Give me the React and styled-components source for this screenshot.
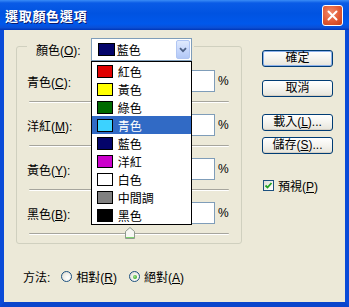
import React from "react";
import styled, { createGlobalStyle } from "styled-components";

const GlobalStyle = createGlobalStyle`
  html, body { margin: 0; padding: 0; background: #ECE9D8; }
  body {
    font-family: "Liberation Sans", "Noto Sans CJK TC", sans-serif;
    font-size: 12px;
    color: #000;
  }
  u { text-decoration: underline; text-underline-offset: 1px; }
`;

const Window = styled.div`
  width: 349px;
  height: 307px;
  display: flex;
  flex-direction: column;
  overflow: hidden;
`;

const TitleBar = styled.div`
  height: 30px;
  flex: none;
  box-sizing: border-box;
  display: flex;
  align-items: center;
  justify-content: space-between;
  padding: 0 6px 0 5px;
  background: linear-gradient(180deg, #3A8CF6 0%, #0A5BE6 10%, #0053E1 45%, #0058EC 80%, #0A4FD6 92%, #0036B8 100%);
`;

const Title = styled.div`
  color: #fff;
  font-family: "Noto Sans CJK TC", sans-serif;
  font-weight: bold;
  font-size: 13px;
  letter-spacing: 0.7px;
  text-shadow: 1px 1px 0 #0A1A6E;
`;

const CloseButton = styled.div`
  width: 21px;
  height: 21px;
  box-sizing: border-box;
  border: 1px solid #fff;
  border-radius: 3px;
  background: radial-gradient(circle at 40% 35%, #F08A6C 0%, #E25A34 55%, #C53D18 100%);
  display: flex;
  align-items: center;
  justify-content: center;
  margin-top: 1px;
`;

const Body = styled.div`
  flex: 1;
  background: #ECE9D8;
  border-left: 4px solid #0A4BD8;
  border-right: 4px solid #0A4BD8;
  border-bottom: 5px solid #0A45CC;
  padding: 2px 0 0 12px;
  display: flex;
  flex-direction: column;
`;

const Main = styled.div`
  display: flex;
  align-items: flex-start;
`;

const Group = styled.fieldset`
  margin: 0;
  min-width: 0;
  width: 226px;
  box-sizing: border-box;
  border: 1px solid #D0D0BF;
  border-radius: 3px;
  padding: 9px 12px 0 10px;
`;

const Legend = styled.legend`
  padding: 6px 2px 0 9px;
  margin: 0;
`;

const LegendInner = styled.div`
  display: flex;
  align-items: center;
  gap: 10px;
`;

const Combo = styled.div`
  position: relative;
  width: 101px;
  height: 23px;
  box-sizing: border-box;
  border: 1px solid #7F9DB9;
  background: #fff;
  display: flex;
  align-items: center;
  padding: 0 1px 0 6px;
`;

const ComboText = styled.span`
  flex: 1;
  margin-left: 2px;
`;

const DropButton = styled.div`
  width: 14px;
  height: 19px;
  box-sizing: border-box;
  border: 1px solid #B1C6F3;
  border-radius: 2px;
  background: linear-gradient(180deg, #E0EAFD 0%, #C4D5FB 60%, #B3C8F6 100%);
  display: flex;
  align-items: center;
  justify-content: center;
`;

const Swatch = styled.span`
  display: block;
  flex: none;
  width: ${p => (p.$wide ? 17 : 16)}px;
  height: 13px;
  box-sizing: border-box;
  border: 1px solid #000;
  background: ${p => p.$color};
`;

const DropList = styled.div`
  position: absolute;
  left: -1px;
  top: calc(100% + 1px);
  width: 101px;
  box-sizing: border-box;
  border: 1px solid #000;
  background: #fff;
  z-index: 10;
`;

const ListItem = styled.div`
  height: 18px;
  display: flex;
  align-items: center;
  gap: 5px;
  padding-left: 5px;
  background: ${p => (p.$active ? "#316AC5" : "transparent")};
  color: ${p => (p.$active ? "#fff" : "#000")};
`;

const FieldRow = styled.div`
  display: flex;
  align-items: center;
  height: 22px;
`;

const FieldLabel = styled.label`
  flex: 1;
`;

const PercentInput = styled.div`
  width: 46px;
  height: 22px;
  box-sizing: border-box;
  border: 1px solid #7F9DB9;
  background: #fff;
`;

const Percent = styled.span`
  margin-left: 3px;
  width: 11px;
`;

const TrackArea = styled.div`
  height: 22px;
  box-sizing: border-box;
  padding: 9px 0 0 2px;
  &:last-child { height: 19px; }
`;

const TrackLine = styled.div`
  position: relative;
  height: 0;
  border-top: 1px solid #A6A59D;
  border-bottom: 1px solid #fff;
  border-radius: 1px;
`;

const Thumb = styled.svg`
  position: absolute;
  left: 96px;
  top: -7px;
`;

const SideColumn = styled.div`
  display: flex;
  flex-direction: column;
  width: 71px;
  margin-left: 20px;
  padding-top: 18px;
`;

const DialogButton = styled.button`
  width: 71px;
  height: 17px;
  margin: ${p => p.$gap}px 0 0;
  padding: 0;
  box-sizing: border-box;
  border: 1px solid #003C74;
  border-radius: 3px;
  background: linear-gradient(180deg, #FFFFFF 0%, #F4F3EE 50%, #E6E4DA 100%);
  box-shadow: ${p => (p.$default ? "inset 0 0 0 1px #8CB0EA" : "inset 0 -1px 0 #D6D0C5")};
  font-family: "Liberation Sans", "Noto Sans CJK TC", sans-serif;
  font-size: 12px;
  line-height: 15px;
  color: #000;
`;

const CheckRow = styled.div`
  display: flex;
  align-items: center;
  gap: 4px;
  margin: 23px 0 0 1px;
`;

const CheckBox = styled.span`
  width: 11px;
  height: 11px;
  box-sizing: border-box;
  border: 1px solid #1C5180;
  background: linear-gradient(135deg, #DCDBD5 0%, #F7F7F5 70%, #fff 100%);
  display: flex;
  align-items: center;
  justify-content: center;
`;

const MethodRow = styled.div`
  display: flex;
  align-items: center;
  margin: 24px 0 0 7px;
`;

const RadioOption = styled.label`
  display: flex;
  align-items: center;
  gap: 4px;
  margin-left: ${p => p.$gap}px;
`;

const Radio = styled.span`
  width: 11px;
  height: 11px;
  box-sizing: border-box;
  border-radius: 50%;
  border: 1px solid #1C5180;
  background: radial-gradient(circle at 65% 65%, #fff 0%, #F2F1EC 45%, #D4D2CA 100%);
  display: flex;
  align-items: center;
  justify-content: center;
  &::after {
    content: "";
    display: ${p => (p.$checked ? "block" : "none")};
    width: 4px;
    height: 4px;
    border-radius: 50%;
    background: radial-gradient(circle at 40% 40%, #9CE08E 0%, #3DAF2D 70%, #21A121 100%);
  }
`;

const colors = [
  { name: "紅色", color: "#E00000" },
  { name: "黃色", color: "#FFFF00" },
  { name: "綠色", color: "#006A00" },
  { name: "青色", color: "#3CD2FF" },
  { name: "藍色", color: "#04046A" },
  { name: "洋紅", color: "#CC00CC" },
  { name: "白色", color: "#FFFFFF" },
  { name: "中間調", color: "#808080" },
  { name: "黑色", color: "#000000" },
];

const fields = [
  { name: "青色", key: "C" },
  { name: "洋紅", key: "M" },
  { name: "黃色", key: "Y" },
  { name: "黑色", key: "B", thumb: true },
];

const App = () => {
  return (
    <Window>
      <GlobalStyle />
      <TitleBar>
        <Title>選取顏色選項</Title>
        <CloseButton>
          <svg width="11" height="11" viewBox="0 0 11 11">
            <path d="M1.5 1.5 L9.5 9.5 M9.5 1.5 L1.5 9.5" stroke="#fff" strokeWidth="2" strokeLinecap="round" />
          </svg>
        </CloseButton>
      </TitleBar>
      <Body>
        <Main>
          <Group>
            <Legend>
              <LegendInner>
                <span>顏色(<u>O</u>):</span>
                <Combo>
                  <Swatch $color="#04046A" $wide />
                  <ComboText>藍色</ComboText>
                  <DropButton>
                    <svg width="8" height="6" viewBox="0 0 8 6">
                      <path d="M1 1.2 L4 4.2 L7 1.2" fill="none" stroke="#4D6185" strokeWidth="1.8" />
                    </svg>
                  </DropButton>
                  <DropList>
                    {colors.map(c => (
                      <ListItem key={c.name} $active={c.name === "青色"}>
                        <Swatch $color={c.color} />
                        <span>{c.name}</span>
                      </ListItem>
                    ))}
                  </DropList>
                </Combo>
              </LegendInner>
            </Legend>
            {fields.map(f => (
              <React.Fragment key={f.key}>
                <FieldRow>
                  <FieldLabel>{f.name}(<u>{f.key}</u>):</FieldLabel>
                  <PercentInput />
                  <Percent>%</Percent>
                </FieldRow>
                <TrackArea>
                  <TrackLine>
                    {f.thumb && (
                      <Thumb width="10" height="12" viewBox="0 0 10 12">
                        <path d="M0.5 4.5 L5 0.5 L9.5 4.5 L9.5 11.5 L0.5 11.5 Z" fill="#F7F7F4" stroke="#8E9A8E" />
                        <path d="M1 10 L9 10 L9 11 L1 11 Z" fill="#7CD46E" />
                      </Thumb>
                    )}
                  </TrackLine>
                </TrackArea>
              </React.Fragment>
            ))}
          </Group>
          <SideColumn>
            <DialogButton $gap={0} $default>確定</DialogButton>
            <DialogButton $gap={13}>取消</DialogButton>
            <DialogButton $gap={17}>載入(<u>L</u>)...</DialogButton>
            <DialogButton $gap={6}>儲存(<u>S</u>)...</DialogButton>
            <CheckRow>
              <CheckBox>
                <svg width="9" height="9" viewBox="0 0 9 9">
                  <path d="M1.5 4.5 L3.5 6.5 L7.5 2" fill="none" stroke="#21A121" strokeWidth="1.8" />
                </svg>
              </CheckBox>
              <span>預視(<u>P</u>)</span>
            </CheckRow>
          </SideColumn>
        </Main>
        <MethodRow>
          <span>方法:</span>
          <RadioOption $gap={11}>
            <Radio />
            <span>相對(<u>R</u>)</span>
          </RadioOption>
          <RadioOption $gap={12}>
            <Radio $checked />
            <span>絕對(<u>A</u>)</span>
          </RadioOption>
        </MethodRow>
      </Body>
    </Window>
  );
};

export default App;
